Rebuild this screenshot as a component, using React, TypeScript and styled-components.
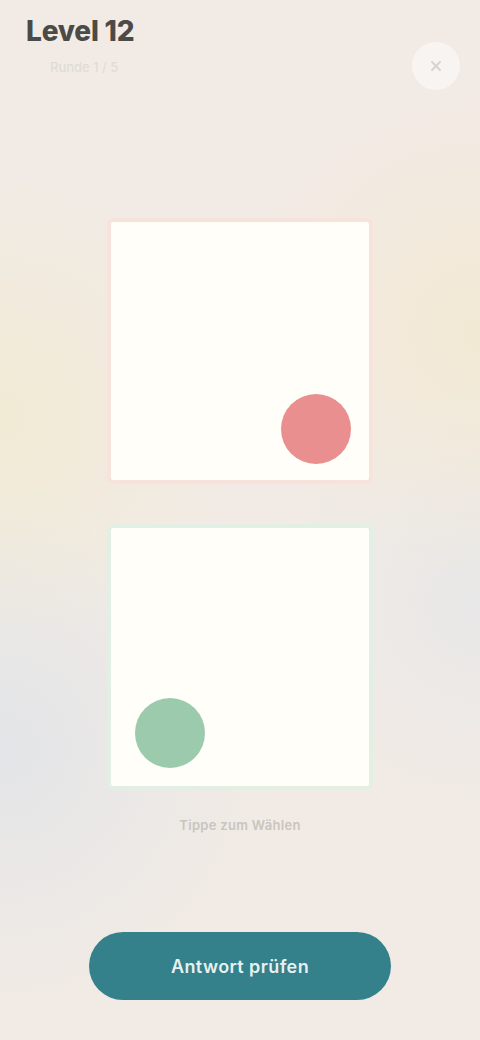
import React from 'react';
import styled, { createGlobalStyle } from 'styled-components';

const GlobalStyle = createGlobalStyle`
  * { box-sizing: border-box; }
  html, body { margin: 0; padding: 0; }
  body {
    font-family: Inter, "Noto Sans", "Liberation Sans", sans-serif;
    background: #f2ebe5;
  }
`;

const Page = styled.div`
  position: relative;
  min-height: 1040px;
  display: flex;
  flex-direction: column;
  padding: 14px 16px 40px 26px;
  background:
    radial-gradient(circle at 0% 40%, rgba(240, 234, 205, 0.7), transparent 30%),
    radial-gradient(circle at 100% 32%, rgba(242, 232, 205, 0.7), transparent 28%),
    radial-gradient(circle at 0% 72%, rgba(225, 228, 232, 0.9), transparent 30%),
    radial-gradient(circle at 100% 58%, rgba(228, 230, 232, 0.7), transparent 28%),
    #f2ebe5;
`;

const Header = styled.header`
  display: flex;
  justify-content: space-between;
  align-items: flex-start;
`;

const TitleBlock = styled.div`
  display: flex;
  flex-direction: column;
  gap: 10px;
`;

const Title = styled.h1`
  margin: 0;
  font-size: 28px;
  line-height: 34px;
  font-weight: 800;
  color: #4b4a47;
  letter-spacing: -0.2px;
`;

const Subtitle = styled.p`
  margin: 0 0 0 24px;
  font-size: 13px;
  line-height: 18px;
  font-weight: 500;
  color: #dedcd8;
`;

const IconButton = styled.button`
  margin-top: 28px;
  margin-right: 4px;
  width: 48px;
  height: 48px;
  border-radius: 50%;
  border: none;
  background: rgba(255, 255, 255, 0.45);
  display: flex;
  align-items: center;
  justify-content: center;
  color: #d4d4d2;
  padding: 0;
`;

const Board = styled.main`
  margin-top: 128px;
  margin-right: 10px;
  display: flex;
  flex-direction: column;
  align-items: center;
  gap: 40px;
`;

const Square = styled.div<{ $border: string }>`
  position: relative;
  width: 266px;
  height: 266px;
  border-radius: 6px;
  border: 4px solid ${({ $border }) => $border};
  background: #fffef9;
`;

const Dot = styled.div<{ $color: string }>`
  position: absolute;
  width: 70px;
  height: 70px;
  border-radius: 50%;
  background: ${({ $color }) => $color};
`;

const Hint = styled.p`
  margin: -14px 0 0;
  font-size: 13px;
  line-height: 18px;
  font-weight: 600;
  color: #c8c5c0;
  letter-spacing: 0.3px;
`;

const Footer = styled.footer`
  margin-top: auto;
  display: flex;
  justify-content: center;
  padding-right: 10px;
`;

const PrimaryButton = styled.button`
  width: 302px;
  height: 68px;
  border: none;
  border-radius: 34px;
  background: #34808b;
  color: #e6f1f1;
  font-family: inherit;
  font-size: 18px;
  font-weight: 600;
  letter-spacing: 0.4px;
`;

export default function App() {
  return (
    <>
      <GlobalStyle />
      <Page>
        <Header>
          <TitleBlock>
            <Title>Level 12</Title>
            <Subtitle>Runde 1 / 5</Subtitle>
          </TitleBlock>
          <IconButton aria-label="Schließen">
            <svg width="16" height="16" viewBox="0 0 24 24" fill="none" stroke="currentColor" strokeWidth="3" strokeLinecap="round">
              <path d="M6 6l12 12M18 6L6 18" />
            </svg>
          </IconButton>
        </Header>

        <Board>
          <Square $border="#f8e3dc">
            <Dot $color="#e98f8f" style={{ right: 18, bottom: 16 }} />
          </Square>
          <Square $border="#e2efe5">
            <Dot $color="#9ccaad" style={{ left: 24, bottom: 18 }} />
          </Square>
          <Hint>Tippe zum Wählen</Hint>
        </Board>

        <Footer>
          <PrimaryButton>Antwort prüfen</PrimaryButton>
        </Footer>
      </Page>
    </>
  );
}
